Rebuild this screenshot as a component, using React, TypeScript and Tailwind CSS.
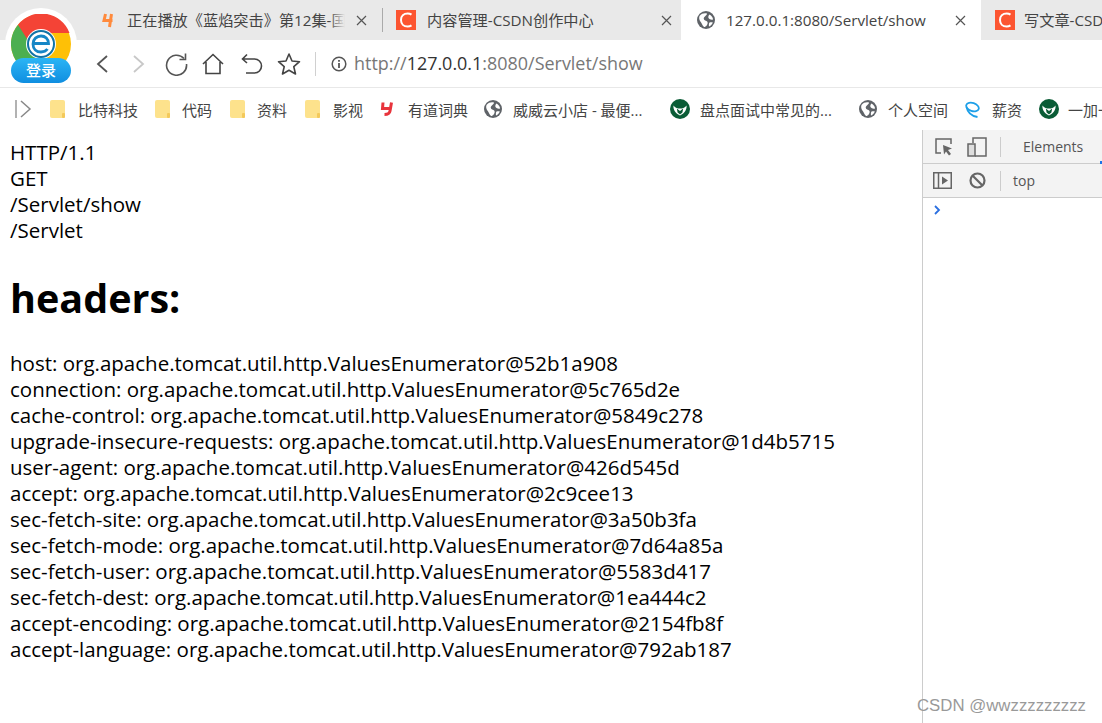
import React from "react";

const cjk = "font-['Open_Sans','Noto_Sans_CJK_SC',sans-serif]";

function Globe({ size = 18 }: { size?: number }) {
  return (
    <svg width={size} height={size} viewBox="0 0 18 18" className="shrink-0">
      <circle cx="9" cy="9" r="9" fill="#5f6368" />
      <path d="M2.500 5C4.500 2.500 7.500 2 10 2.600 10 4.500 8 5 7 6.500 6 8 7.500 9.500 9.500 10 11 10.500 11 12.500 10 14 9 15.500 8 16 7 16 5 14 4.500 11.500 3 10 2 8 2 6.500 2.500 5z" fill="#fff" />
      <path d="M12.500 3.500C14.500 4.500 16 6.500 16 8.500 14.500 9 12.500 8.500 11.500 7 11 5.800 11.500 4.500 12.500 3.500zM12.500 11.500C13.800 11 15 11 15.800 11.500 15 13.500 13.500 15 12 15.500 11.800 14 11.800 12.500 12.500 11.500z" fill="#fff" />
    </svg>
  );
}

function CsdnIcon() {
  return (
    <span className="flex h-5 w-5 shrink-0 items-center justify-center bg-[#fc5531]">
      <svg width="14" height="16" viewBox="0 0 14 16">
        <path d="M12.500 2.600C11.300 1.800 10 1.500 8.600 1.500 4.800 1.500 2 4.200 2 8s2.800 6.500 6.600 6.500c1.400 0 2.700-.3 3.900-1.100" fill="none" stroke="#fff" strokeWidth="2" />
      </svg>
    </span>
  );
}

function Close() {
  return (
    <svg width="11" height="11" viewBox="0 0 11 11" className="shrink-0">
      <path d="M1 1l9 9M10 1l-9 9" stroke="#555" strokeWidth="1.200" />
    </svg>
  );
}

function Folder() {
  return (
    <svg width="15" height="18" viewBox="0 0 15 18" className="shrink-0">
      <rect x="0" y="0" width="15" height="18" rx="2" fill="#fde28c" />
      <rect x="12" y="13" width="3" height="5" rx="1" fill="#f3c95b" />
    </svg>
  );
}

function Shield() {
  return (
    <svg width="20" height="20" viewBox="0 0 20 20" className="shrink-0">
      <circle cx="10" cy="10" r="10" fill="#0a5c36" />
      <path d="M3.500 6.500C5 9 8 9.500 10 9.500S15 9 16.500 6.500C17 10 15 14 10 16.500 5 14 3 10 3.500 6.500z" fill="#fff" />
      <path d="M6.800 9.500L10 12l3.200-2.500-.8 4-2.400 2-2.400-2z" fill="#0a5c36" />
    </svg>
  );
}

function Logo() {
  return (
    <div className="absolute left-[5px] top-[8px] z-10 h-[76px] w-[72px]">
      <div className="absolute left-0 top-0 h-[72px] w-[72px] rounded-full bg-white" />
      <svg width="60" height="60" viewBox="0 0 60 60" className="absolute left-[6px] top-[6px]">
        <circle cx="30" cy="30" r="30" fill="#fec006" />
        <path d="M30 30L30 60A30 30 0 0 1 7 10.700z" fill="#4caf50" />
        <path d="M30 19H58.500A30 30 0 0 0 7 10.700L18 28z" fill="#f44336" />
        <circle cx="30" cy="30" r="15" fill="#fff" />
        <circle cx="30" cy="30" r="13" fill="none" stroke="#1173a6" strokeWidth="2" />
        <path d="M22 29.500h15.500c0-4.500-3.300-7.500-7.500-7.500s-8 3-8 8 3.500 8 8 8c2.800 0 5-1 6.500-3" fill="none" stroke="#1686c6" strokeWidth="2.800" />
      </svg>
      <div className={`absolute left-[6px] top-[50px] flex h-[25px] w-[60px] items-center justify-center rounded-full bg-gradient-to-b from-[#2bb5f5] to-[#0f8ee0] text-[15px] font-medium leading-none text-white ${cjk}`}>
        登录
      </div>
    </div>
  );
}

function Bookmark({ icon, label, w, gap }: { icon: React.ReactNode; label: string; w: string; gap: string }) {
  return (
    <div className={`flex shrink-0 items-center ${w}`}>
      {icon}
      <span className={`whitespace-nowrap pt-[2px] text-[15px] leading-none text-[#444] ${gap}`}>{label}</span>
    </div>
  );
}

const lines = [
  "host: org.apache.tomcat.util.http.ValuesEnumerator@52b1a908",
  "connection: org.apache.tomcat.util.http.ValuesEnumerator@5c765d2e",
  "cache-control: org.apache.tomcat.util.http.ValuesEnumerator@5849c278",
  "upgrade-insecure-requests: org.apache.tomcat.util.http.ValuesEnumerator@1d4b5715",
  "user-agent: org.apache.tomcat.util.http.ValuesEnumerator@426d545d",
  "accept: org.apache.tomcat.util.http.ValuesEnumerator@2c9cee13",
  "sec-fetch-site: org.apache.tomcat.util.http.ValuesEnumerator@3a50b3fa",
  "sec-fetch-mode: org.apache.tomcat.util.http.ValuesEnumerator@7d64a85a",
  "sec-fetch-user: org.apache.tomcat.util.http.ValuesEnumerator@5583d417",
  "sec-fetch-dest: org.apache.tomcat.util.http.ValuesEnumerator@1ea444c2",
  "accept-encoding: org.apache.tomcat.util.http.ValuesEnumerator@2154fb8f",
  "accept-language: org.apache.tomcat.util.http.ValuesEnumerator@792ab187",
];

export default function App() {
  return (
    <div className={`relative h-[723px] w-[1102px] overflow-hidden bg-white ${cjk}`}>
      <Logo />

      <div className="flex h-10 bg-[#e9e9e9]">
        <div className="flex h-10 w-[382px] shrink-0 items-center pl-[102px]">
          <svg width="13" height="15" viewBox="0 0 13 15" className="shrink-0">
            <path d="M3.500 1L2 7.500h8.500M9.500 1L7.500 14" fill="none" stroke="#ff8a3c" strokeWidth="3" />
          </svg>
          <div className="relative ml-[12px] w-[218px] overflow-hidden whitespace-nowrap text-[15.200px] text-[#444]">
            正在播放《蓝焰突击》第12集-国
            <div className="absolute inset-y-0 right-0 w-4 bg-gradient-to-r from-transparent to-[#e9e9e9]" />
          </div>
          <span className="ml-[11px] flex"><Close /></span>
        </div>
        <div className="my-2 h-6 w-px shrink-0 bg-[#aaa]" />
        <div className="flex w-[298px] shrink-0 items-center pl-[13px]">
          <CsdnIcon />
          <span className="ml-[11px] w-[230px] whitespace-nowrap text-[15.200px] text-[#444]">内容管理-CSDN创作中心</span>
          <span className="ml-[4px] flex"><Close /></span>
        </div>
        <div className="flex w-[300px] shrink-0 items-center bg-white pl-[16px]">
          <Globe />
          <span className="ml-[11px] w-[222px] whitespace-nowrap text-[15.200px] text-[#444]">127.0.0.1:8080/Servlet/show</span>
          <span className="ml-[7px] flex"><Close /></span>
        </div>
        <div className="flex h-10 min-w-0 flex-1 items-center overflow-hidden pl-[14px]">
          <CsdnIcon />
          <span className="ml-[9px] whitespace-nowrap text-[15.200px] text-[#444]">写文章-CSDN博客</span>
        </div>
      </div>

      <div className="flex h-[48px] items-center border-b border-[#e8e8e8] pl-[95px]">
        <svg width="14" height="20" viewBox="0 0 14 20" className="shrink-0">
          <path d="M12 2L3 10l9 8" fill="none" stroke="#555" strokeWidth="1.800" />
        </svg>
        <svg width="14" height="20" viewBox="0 0 14 20" className="ml-[23px] shrink-0">
          <path d="M2 2l9 8-9 8" fill="none" stroke="#c8c8c8" strokeWidth="1.800" />
        </svg>
        <svg width="24" height="24" viewBox="0 0 24 24" className="ml-[18px] shrink-0">
          <path d="M20 6.500A10 10 0 1 0 22.500 12" fill="none" stroke="#555" strokeWidth="1.600" />
          <path d="M21.500 1.500v6h-6" fill="none" stroke="#555" strokeWidth="1.600" />
        </svg>
        <svg width="22" height="22" viewBox="0 0 22 22" className="ml-[14px] shrink-0">
          <path d="M1 11L11 1.500 21 11M4 9v11.500h14V9" fill="none" stroke="#444" strokeWidth="1.600" />
        </svg>
        <svg width="22" height="22" viewBox="0 0 22 22" className="ml-[17px] shrink-0">
          <path d="M6 1.500L1.500 6 6 10M2 6h11.500a6.500 6.500 0 0 1 0 14H5" fill="none" stroke="#444" strokeWidth="1.600" />
        </svg>
        <svg width="24" height="24" viewBox="0 0 24 24" className="ml-[14px] shrink-0">
          <path d="M12 2l3 7 7.500.7-5.700 5 1.700 7.300L12 18.200 5.500 22l1.700-7.300-5.700-5L9 9z" fill="none" stroke="#444" strokeWidth="1.600" strokeLinejoin="round" />
        </svg>
        <div className="ml-[14px] h-6 w-px shrink-0 bg-[#d0d0d0]" />
        <svg width="16" height="16" viewBox="0 0 16 16" className="ml-[15px] shrink-0">
          <circle cx="8" cy="8" r="6.800" fill="none" stroke="#555" strokeWidth="1.500" />
          <path d="M8 7v5M8 4v1.800" stroke="#555" strokeWidth="1.800" />
        </svg>
        <span className="ml-[7px] whitespace-nowrap text-[17.950px] leading-none text-[#777]">
          http://<span className="text-[#333]">127.0.0.1</span>:8080/Servlet/show
        </span>
      </div>

      <div className="flex h-[42px] items-center overflow-hidden pl-[15px]">
        <svg width="18" height="18" viewBox="0 0 18 18" className="mr-[17px] shrink-0">
          <path d="M1 0v18" stroke="#999" strokeWidth="1.500" />
          <path d="M6 1l9 8-9 8" fill="none" stroke="#888" strokeWidth="1.500" />
        </svg>
        <Bookmark w="w-[105px]" gap="ml-[13px]" icon={<Folder />} label="比特科技" />
        <Bookmark w="w-[75px]" gap="ml-[12px]" icon={<Folder />} label="代码" />
        <Bookmark w="w-[75px]" gap="ml-[12px]" icon={<Folder />} label="资料" />
        <Bookmark w="w-[75px]" gap="ml-[13px]" icon={<Folder />} label="影视" />
        <Bookmark
          w="w-[104px]"
          gap="ml-[13px]"
          icon={
            <svg width="15" height="16" viewBox="0 0 15 16" className="shrink-0">
              <path d="M3 1.500L2.500 7.500H10M11.500 1.500L10 10c-.4 2.500-2 3.500-5.500 3.500" fill="none" stroke="#e8343c" strokeWidth="3" />
            </svg>
          }
          label="有道词典"
        />
        <Bookmark w="w-[186px]" gap="ml-[11px]" icon={<Globe />} label="威威云小店 - 最便..." />
        <Bookmark w="w-[189px]" gap="ml-[10px]" icon={<Shield />} label="盘点面试中常见的..." />
        <Bookmark w="w-[106px]" gap="ml-[11px]" icon={<Globe />} label="个人空间" />
        <Bookmark
          w="w-[74px]"
          gap="ml-[12px]"
          icon={
            <svg width="15" height="17" viewBox="0 0 15 17" className="shrink-0">
              <ellipse cx="7.500" cy="6" rx="6.500" ry="4" transform="rotate(18 7.500 6)" fill="none" stroke="#1d9fe8" strokeWidth="1.800" />
              <path d="M1.500 6c1 5 5 9 11 10" fill="none" stroke="#1d9fe8" strokeWidth="1.800" />
            </svg>
          }
          label="薪资"
        />
        <Bookmark w="w-[70px]" gap="ml-[9px]" icon={<Shield />} label="一加一" />
      </div>

      <div className="flex h-[593px]">
        <main className="min-w-0 flex-1 pl-[10px] pt-[9px] text-[20.500px] leading-[26px] text-black">
          <div>HTTP/1.1</div>
          <div>GET</div>
          <div>/Servlet/show</div>
          <div>/Servlet</div>
          <h1 className="mb-[25px] mt-[28px] text-[39.500px] font-bold leading-[54px]">headers:</h1>
          {lines.map((l) => (
            <div key={l} className="whitespace-nowrap">{l}</div>
          ))}
        </main>
        <aside className="w-[180px] shrink-0 border-l border-[#ccc] bg-white">
          <div className="relative flex h-[34px] items-center border-b border-[#ccc] bg-[#f3f3f3] pl-[12px]">
            <svg width="18" height="18" viewBox="0 0 18 18" className="shrink-0">
              <path d="M6 15H1V1h15v5" fill="none" stroke="#666" strokeWidth="1.500" />
              <path d="M8 7l9 3.500-4 1.500 3 4-2 1.500-3-4-2 3z" fill="#666" />
            </svg>
            <svg width="20" height="20" viewBox="0 0 20 20" className="ml-[14px] shrink-0">
              <path d="M6 6V1h13v18H8" fill="none" stroke="#666" strokeWidth="1.500" />
              <rect x="1" y="7" width="7" height="12" fill="#ddd" stroke="#666" strokeWidth="1.500" />
            </svg>
            <div className="ml-[13px] h-[20px] w-px shrink-0 bg-[#ccc]" />
            <span className="ml-[22px] text-[14px] text-[#555]">Elements</span>
            <div className="absolute bottom-[-1px] right-0 h-[3px] w-[2px] bg-[#1a73e8]" />
          </div>
          <div className="flex h-[34px] items-center border-b border-[#ccc] bg-[#f3f3f3] pl-[10px]">
            <svg width="19" height="17" viewBox="0 0 19 17" className="shrink-0">
              <rect x="0.750" y="0.750" width="17.500" height="15.500" fill="none" stroke="#666" strokeWidth="1.500" />
              <path d="M5.500 1v15" stroke="#666" strokeWidth="1.500" />
              <path d="M9 4.500l6 4-6 4z" fill="#666" />
            </svg>
            <svg width="17" height="17" viewBox="0 0 17 17" className="ml-[17px] shrink-0">
              <circle cx="8.500" cy="8.500" r="7" fill="none" stroke="#666" strokeWidth="2.200" />
              <path d="M3.500 3.500l10 10" stroke="#666" strokeWidth="2.200" />
            </svg>
            <div className="ml-[14px] h-[20px] w-px shrink-0 bg-[#ccc]" />
            <span className="ml-[12px] text-[14px] text-[#555]">top</span>
          </div>
          <div className="pl-[11px] pt-[7px]">
            <svg width="7" height="10" viewBox="0 0 7 10">
              <path d="M1 1l4 4-4 4" fill="none" stroke="#2a6fe0" strokeWidth="1.800" />
            </svg>
          </div>
        </aside>
      </div>

      <div className="absolute left-[917px] top-[695px] whitespace-nowrap font-['Liberation_Sans',sans-serif] text-[16.800px] leading-[22px] text-[#999]">
        CSDN @wwzzzzzzzzz
      </div>
    </div>
  );
}
